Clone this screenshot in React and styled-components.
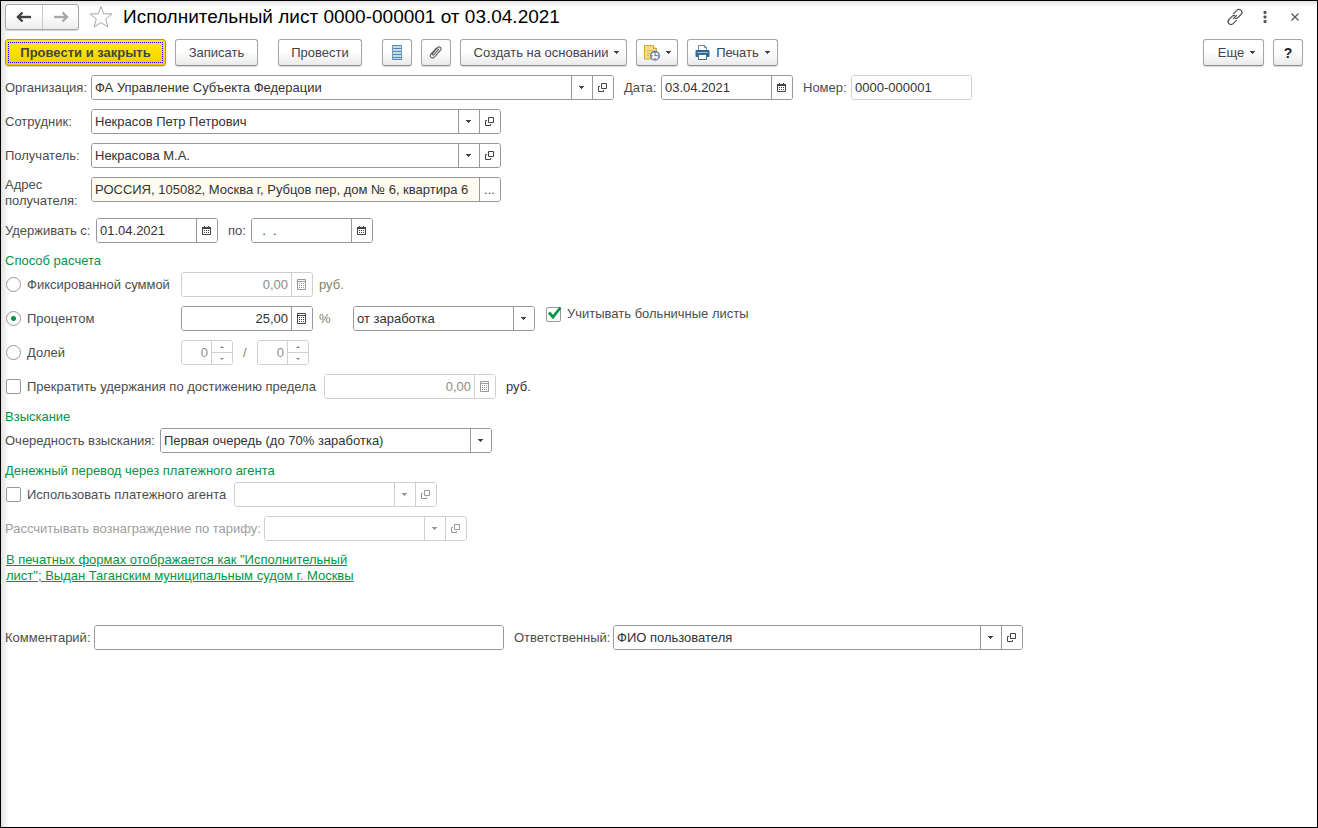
import React, { useState } from 'react';
import styled, { createGlobalStyle, css } from 'styled-components';

const GlobalStyle = createGlobalStyle`
  *, *::before, *::after {
    box-sizing: border-box;
  }

  body {
    margin: 0;
    background: #fff;
  }

  body, button, input, select {
    font-family: 'Liberation Sans', Arial, sans-serif;
    font-size: 13px;
    line-height: 16px;
    color: #4d4d4d;
  }
`;

// Window
const Window = styled.div`
  min-height: 100vh;
  padding: 3px 0 16px 4px;
  border: 1px solid #000;
  background:
    linear-gradient(to bottom, #e4e4e4, rgba(255, 255, 255, 0) 6px),
    linear-gradient(to right, #e2e2e2, #fff 8px);
`;

const TitleBar = styled.header`
  display: flex;
  align-items: center;
  height: 26px;
  padding-right: 7px;
`;

const History = styled.div`
  display: flex;
  height: 26px;
  border: 1px solid #a6a6a6;
  border-radius: 3px;
  background: linear-gradient(#fff 40%, #ececec);
  box-shadow: 0 1px 1px #d0d0d0;
`;

const HistoryButton = styled.button`
  display: flex;
  align-items: center;
  justify-content: center;
  width: 36px;
  padding: 0;
  border: 0;
  background: none;
  color: ${props => (props.disabled ? '#a8a8a8' : '#404040')};

  & + & {
    border-left: 1px solid #c8c8c8;
  }
`;

const PlainButton = styled.button`
  display: flex;
  align-items: center;
  justify-content: center;
  width: 30px;
  height: 26px;
  padding: 0;
  border: 0;
  background: none;
  color: #555;
`;

const Star = styled(PlainButton)`
  width: 24px;
  margin: 0 10px;
`;

const Title = styled.h1`
  flex: 1;
  margin: 0;
  font-size: 19px;
  line-height: 26px;
  font-weight: 400;
  color: #000;
  white-space: nowrap;
`;

// Command bar
const Toolbar = styled.div`
  display: flex;
  gap: 9px;
  margin-top: 9px;
  padding-right: 14px;
`;

const Spacer = styled.div`
  flex: 1;
`;

const Group = styled.div`
  display: flex;
  gap: 9px;
  margin-right: 11px;
`;

const Button = styled.button`
  display: flex;
  align-items: center;
  justify-content: center;
  gap: 6px;
  min-width: ${props => props.$width || 30}px;
  height: 27px;
  padding: 0 0 0 ${props => (props.$menu ? 6 : 0)}px;
  border: 1px solid #a6a6a6;
  border-bottom-color: #8f8f8f;
  border-radius: 3px;
  background: linear-gradient(#fff 45%, #eaeaea);
  box-shadow: 0 1px 1px #d4d4d4;
  color: #444;
  white-space: nowrap;

  ${props => props.$primary && css`
    border-color: #b09a1c;
    background: linear-gradient(#ffe817, #fbdc00 60%, #efcd00);
    font-weight: 700;
    outline: 1px dotted #0000ff;
    outline-offset: -4px;
  `}
`;

const Help = styled(Button)`
  font-size: 14px;
  font-weight: 700;
  color: #222;
`;

// Form
const Form = styled.form`
  display: flex;
  flex-direction: column;
  gap: 9px;
  margin-top: 9px;
  padding-right: 14px;
`;

const Row = styled.div`
  display: flex;
  align-items: center;
  min-height: 25px;
`;

const FooterRow = styled(Row)`
  margin-top: 32px;
`;

const TopRow = styled(Row)`
  align-items: flex-start;
`;

const Label = styled.label`
  flex: none;
  width: ${props => (props.$width ? `${props.$width}px` : 'auto')};
  margin-left: ${props => props.$indent || 0}px;
  color: ${props => (props.$muted ? '#a0a0a0' : '#4d4d4d')};
`;

const Unit = styled.span`
  flex: none;
  width: ${props => (props.$width ? `${props.$width}px` : 'auto')};
  margin-left: ${props => props.$indent || 6}px;
  color: ${props => (props.$strong ? '#333' : '#85826a')};
`;

const Section = styled.fieldset`
  display: flex;
  flex-direction: column;
  gap: 9px;
  min-width: 0;
  margin: 0;
  padding: 0;
  border: 0;
`;

const Legend = styled.legend`
  margin-bottom: 3px;
  padding: 1px 0 0;
  color: #009646;
`;

const Field = styled.div`
  display: flex;
  flex: 0 1 ${props => props.$width}px;
  min-width: 0;
  height: 25px;
  border: 1px solid ${props => (props.$muted ? '#cfcfcf' : '#989898')};
  border-radius: 3px;
  background: #fff;
  color: ${props => (props.$muted ? '#999' : '#444')};
  overflow: hidden;
`;

const Input = styled.input`
  flex: 1;
  min-width: 0;
  padding: 0 3px;
  border: 0;
  outline: 0;
  background: ${props => (props.$tinted ? '#fffbf0' : '#fff')};
  color: #333;
  text-align: ${props => props.$align || 'left'};

  &:disabled {
    color: #8c8c8c;
  }
`;

const SelectBox = styled.div`
  position: relative;
  display: flex;
  flex: 1;
  min-width: 0;
`;

const Select = styled.select`
  flex: 1;
  min-width: 0;
  padding: 0 24px 0 3px;
  border: 0;
  outline: 0;
  appearance: none;
  background: #fff;
  color: #333;
`;

const SelectArrow = styled.span`
  position: absolute;
  top: 0;
  right: 0;
  bottom: 0;
  display: flex;
  align-items: center;
  justify-content: center;
  width: 21px;
  padding-right: 1px;
  border-left: 1px solid ${props => (props.$muted ? '#cfcfcf' : '#989898')};
  pointer-events: none;
`;

const FieldButton = styled.button`
  display: flex;
  flex: none;
  align-items: center;
  justify-content: center;
  width: 21px;
  padding: 0 1px 0 0;
  border: 0;
  border-left: 1px solid ${props => (props.disabled ? '#cfcfcf' : '#989898')};
  background: #fff;
  color: ${props => (props.disabled ? '#999' : '#444')};
`;

const Steps = styled.div`
  display: flex;
  flex: none;
  flex-direction: column;
  width: 21px;
  border-left: 1px solid #cfcfcf;
`;

const StepButton = styled.button`
  display: flex;
  flex: 1;
  align-items: center;
  justify-content: center;
  padding: 0;
  border: 0;
  background: #fff;
  color: #888;

  & + & {
    border-top: 1px solid #cfcfcf;
  }
`;

const Choice = styled.label`
  display: flex;
  flex: none;
  align-items: center;
  gap: 6px;
  width: ${props => (props.$width ? `${props.$width}px` : 'auto')};
  padding-left: 1px;
  white-space: nowrap;
`;

const TopChoice = styled(Choice)`
  align-self: flex-start;
  margin-left: 10px;
`;

const Radio = styled.input`
  width: 15px;
  height: 15px;
  margin: 0;
  border: 1px solid #989898;
  border-radius: 50%;
  appearance: none;
  background: #fff;

  &:checked {
    background: radial-gradient(circle, #009646 2px, #fff 3px);
  }
`;

const CheckFrame = styled.span`
  position: relative;
  display: flex;

  svg {
    position: absolute;
    right: -1px;
    bottom: 2px;
    pointer-events: none;
  }
`;

const Check = styled.input`
  width: 15px;
  height: 15px;
  margin: 0;
  border: 1px solid #989898;
  border-radius: 2px;
  appearance: none;
  background: #fff;
`;

const PrintLink = styled.a`
  display: block;
  max-width: 360px;
  margin: 2px 0 0 1px;
  color: #009646;
  text-decoration: underline;
`;

// Icons
const ArrowIcon = ({ flip }) => (
  <svg width="16" height="12" viewBox="0 0 16 12" fill="none" stroke="currentColor">
    <g transform={flip ? 'matrix(-1 0 0 1 16 0)' : undefined}>
      <path d="M2 6h13" strokeWidth="2.4" />
      <path d="M6.5 1.5L2 6l4.5 4.5" strokeWidth="2.4" />
    </g>
  </svg>
);

const StarIcon = () => (
  <svg width="24" height="24" viewBox="0 0 24 24" fill="#fff" stroke="#a3a9ad">
    <path d="M12 1.5l2.8 7.3 8.2.2-6.3 5 2.2 8L12 17.5 5.1 22l2.2-8L1 9l8.2-.2z" />
  </svg>
);

const LinkIcon = () => (
  <svg width="18" height="18" viewBox="0 0 18 18" fill="none" stroke="currentColor" strokeWidth="1.2" strokeLinecap="round">
    <path d="M7.6 5.6l3.2-3.3a2.9 2.9 0 0 1 4.3 0 3 3 0 0 1 0 4.2l-3.2 3.2a2.9 2.9 0 0 1-2.6.8" />
    <path d="M10.4 12.4l-3.2 3.3a2.9 2.9 0 0 1-4.3 0 3 3 0 0 1 0-4.2l3.200-3.200a2.900 2.900 0 0 1 2.600-.8" />
    <path d="M7.500 10.500l3-3" />
  </svg>
);

const DotsIcon = () => (
  <svg width="4" height="12" viewBox="0 0 4 12" fill="currentColor">
    <rect x=".5" y="0" width="3" height="3" rx="1" />
    <rect x=".5" y="4.5" width="3" height="3" rx="1" />
    <rect x=".5" y="9" width="3" height="3" rx="1" />
  </svg>
);

const CloseIcon = () => (
  <svg width="8" height="8" viewBox="0 0 8 8" stroke="currentColor" strokeWidth="1.2">
    <path d="M.5.5l7 7M7.5.5l-7 7" />
  </svg>
);

const ListIcon = () => (
  <svg width="10" height="15" viewBox="0 0 10 15">
    <path d="M0 0h10v15H0z" fill="#c3dcea" />
    <path d="M0 .5h10M0 3.5h10M0 6.5h10M0 9.5h10M0 12.5h10M0 14.5h10" stroke="#5588ab" />
    <path d="M.5 0v15M9.500 0v15" stroke="#6e9dbc" />
  </svg>
);

const ClipIcon = () => (
  <svg width="14" height="15" viewBox="0 0 14 15" fill="none" stroke="#5c5c5c" strokeWidth="1.1" strokeLinecap="round">
    <path d="M9.800 4.200L5 9.600c-.9 1-2.200-.1-1.400-1.200l5-5.700c1.800-1.900 4.500.4 2.900 2.500l-6 6.900c-2.200 2.300-5.500-.4-3.600-3L7.400 3" />
  </svg>
);

const ReportIcon = () => (
  <svg width="16" height="17" viewBox="0 0 16 17">
    <path d="M.5 1.500h9l3 3v10.500H.5z" fill="#f7dc86" stroke="#d2a63c" />
    <path d="M9.500 1.500v3h3" fill="#fff3c4" stroke="#d2a63c" />
    <path d="M3 6.500h6M3 9h3M3 11.500h2" stroke="#dfb754" />
    <circle cx="11" cy="11.800" r="4.300" fill="#fff" stroke="#3f7fb5" strokeWidth="1.300" />
    <path d="M11 12V9.500M11 12l2-1" stroke="#3f6d9b" />
    <path d="M11 8v1.500M11 14v1.500M7.300 11.800h1.500M13.200 11.800h1.500" stroke="#e23c2d" strokeWidth="1.300" />
  </svg>
);

const PrinterIcon = () => (
  <svg width="15" height="15" viewBox="0 0 15 15">
    <path d="M3.500 6V.5h6l2 2V6" fill="#fff" stroke="#6b8ca5" />
    <path d="M9.500.5v2h2" fill="none" stroke="#6b8ca5" />
    <rect x=".5" y="5" width="14" height="7" rx="1" fill="#2f668f" />
    <path d="M2 7.500h11" stroke="#9cc2da" />
    <rect x="3.500" y="9.500" width="8" height="5" fill="#fff" stroke="#41718f" />
  </svg>
);

const Caret = () => (
  <svg width="5" height="3" viewBox="0 0 5 3" fill="currentColor">
    <path d="M0 0h5v1H4v1H3v1H2V2H1V1H0z" />
  </svg>
);

const StepIcon = ({ up }) => (
  <svg width="4" height="2" viewBox="0 0 4 2" fill="currentColor">
    <path d={up ? 'M0 2h4L2 0z' : 'M0 0h4L2 2z'} />
  </svg>
);

const OpenIcon = () => (
  <svg width="9" height="9" viewBox="0 0 9 9" fill="none" stroke="currentColor">
    <path d="M3.5.5h5v5h-5z" />
    <path d="M2 3.5H.5v5h5V7" />
  </svg>
);

const CalendarIcon = () => (
  <svg width="9" height="11" viewBox="0 0 9 11" fill="none" stroke="currentColor">
    <path d="M.5 2.5h8v7h-8z" />
    <path d="M0 2.500h9M0 3.500h9" />
    <path d="M2.500 1v2M6.500 1v2" />
    <path d="M2 5.500h5M2 7.500h5" strokeDasharray="1 1" />
  </svg>
);

const CalculatorIcon = () => (
  <svg width="9" height="11" viewBox="0 0 9 11" fill="none" stroke="currentColor">
    <path d="M.5.5h8v10h-8zM0 2.5h9" />
    <path d="M2 4.5h5M2 6.5h5M2 8.5h5" strokeDasharray="1 1" />
  </svg>
);

const TickIcon = () => (
  <svg width="15" height="14" viewBox="0 0 15 14" fill="none" stroke="#009646" strokeWidth="2.8">
    <path d="M2 6.5l4 4.5L13.5 1.5" />
  </svg>
);

// Composite fields
const PickField = ({ id, width, value, open, disabled }) => (
  <Field $width={width} $muted={disabled}>
    <SelectBox>
      <Select id={id} disabled={disabled} defaultValue={value}>
        <option>{value}</option>
      </Select>
      <SelectArrow $muted={disabled}><Caret /></SelectArrow>
    </SelectBox>
    {open && (
      <FieldButton type="button" disabled={disabled} aria-label="Открыть"><OpenIcon /></FieldButton>
    )}
  </Field>
);

const DateField = ({ id, width, value }) => (
  <Field $width={width}>
    <Input id={id} defaultValue={value} />
    <FieldButton type="button" aria-label="Выбрать дату"><CalendarIcon /></FieldButton>
  </Field>
);

const AmountField = ({ label, width, value, disabled }) => (
  <Field $width={width} $muted={disabled}>
    <Input aria-label={label} $align="right" defaultValue={value} disabled={disabled} />
    <FieldButton type="button" disabled={disabled} aria-label="Калькулятор"><CalculatorIcon /></FieldButton>
  </Field>
);

const SpinField = ({ label }) => (
  <Field $width={52} $muted>
    <Input aria-label={label} $align="right" defaultValue="0" disabled />
    <Steps>
      <StepButton type="button" disabled aria-label="Больше"><StepIcon up /></StepButton>
      <StepButton type="button" disabled aria-label="Меньше"><StepIcon /></StepButton>
    </Steps>
  </Field>
);

const CheckBox = ({ checked: initial = false }) => {
  const [checked, setChecked] = useState(initial);

  return (
    <CheckFrame>
      <Check type="checkbox" checked={checked} onChange={e => setChecked(e.target.checked)} />
      {checked && <TickIcon />}
    </CheckFrame>
  );
};

const App = () => (
  <Window>
    <GlobalStyle />
    <TitleBar>
      <History>
        <HistoryButton aria-label="Назад"><ArrowIcon /></HistoryButton>
        <HistoryButton disabled aria-label="Вперед"><ArrowIcon flip /></HistoryButton>
      </History>
      <Star aria-label="В избранное"><StarIcon /></Star>
      <Title>Исполнительный лист 0000-000001 от 03.04.2021</Title>
      <PlainButton aria-label="Получить ссылку"><LinkIcon /></PlainButton>
      <PlainButton aria-label="Меню"><DotsIcon /></PlainButton>
      <PlainButton aria-label="Закрыть"><CloseIcon /></PlainButton>
    </TitleBar>

    <Toolbar>
      <Group>
        <Button $primary $width={161}>Провести и закрыть</Button>
        <Button $width={83}>Записать</Button>
      </Group>
      <Group>
        <Button $width={84}>Провести</Button>
      </Group>
      <Button aria-label="Движения документа"><ListIcon /></Button>
      <Button aria-label="Присоединенные файлы"><ClipIcon /></Button>
      <Button $menu $width={167}>Создать на основании <Caret /></Button>
      <Button $width={42} aria-label="Отчеты"><ReportIcon /><Caret /></Button>
      <Button $width={91}><PrinterIcon /> Печать <Caret /></Button>
      <Spacer />
      <Button $menu $width={61}>Еще <Caret /></Button>
      <Help>?</Help>
    </Toolbar>

    <Form onSubmit={e => e.preventDefault()}>
      <Row>
        <Label htmlFor="organization" $width={86}>Организация:</Label>
        <PickField id="organization" width={523} value="ФА Управление Субъекта Федерации" open />
        <Label htmlFor="date" $width={37} $indent={10}>Дата:</Label>
        <DateField id="date" width={132} value="03.04.2021" />
        <Label htmlFor="number" $width={48} $indent={10}>Номер:</Label>
        <Field $width={121} $muted>
          <Input id="number" readOnly value="0000-000001" />
        </Field>
      </Row>
      <Row>
        <Label htmlFor="employee" $width={86}>Сотрудник:</Label>
        <PickField id="employee" width={410} value="Некрасов Петр Петрович" open />
      </Row>
      <Row>
        <Label htmlFor="recipient" $width={86}>Получатель:</Label>
        <PickField id="recipient" width={410} value="Некрасова М.А." open />
      </Row>
      <TopRow>
        <Label htmlFor="address" $width={86}>Адрес получателя:</Label>
        <Field $width={410}>
          <Input id="address" $tinted defaultValue="РОССИЯ, 105082, Москва г, Рубцов пер, дом № 6, квартира 6" />
          <FieldButton type="button" aria-label="Изменить адрес">...</FieldButton>
        </Field>
      </TopRow>
      <Row>
        <Label htmlFor="from" $width={91}>Удерживать с:</Label>
        <DateField id="from" width={122} value="01.04.2021" />
        <Label htmlFor="to" $width={23} $indent={10}>по:</Label>
        <DateField id="to" width={122} value="  .  ." />
      </Row>

      <Section>
        <Legend>Способ расчета</Legend>
        <Row>
          <Choice $width={176}><Radio type="radio" name="method" />Фиксированной суммой</Choice>
          <AmountField label="Сумма" width={132} value="0,00" disabled />
          <Unit>руб.</Unit>
        </Row>
        <Row>
          <Choice $width={176}><Radio type="radio" name="method" defaultChecked />Процентом</Choice>
          <AmountField label="Процент" width={132} value="25,00" />
          <Unit as="label" htmlFor="base" $width={34}>%</Unit>
          <PickField id="base" width={182} value="от заработка" />
          <TopChoice><CheckBox checked />Учитывать больничные листы</TopChoice>
        </Row>
        <Row>
          <Choice $width={176}><Radio type="radio" name="method" />Долей</Choice>
          <SpinField label="Числитель" />
          <Unit $indent={10} $width={14}>/</Unit>
          <SpinField label="Знаменатель" />
        </Row>
        <Row>
          <Choice $width={319}><CheckBox />Прекратить удержания по достижению предела</Choice>
          <AmountField label="Предел" width={172} value="0,00" disabled />
          <Unit $strong $indent={10}>руб.</Unit>
        </Row>
      </Section>

      <Section>
        <Legend>Взыскание</Legend>
        <Row>
          <Label htmlFor="priority" $width={155}>Очередность взыскания:</Label>
          <PickField id="priority" width={332} value="Первая очередь (до 70% заработка)" />
        </Row>
      </Section>

      <Section>
        <Legend id="agent-legend">Денежный перевод через платежного агента</Legend>
        <Row>
          <Choice $width={229}><CheckBox />Использовать платежного агента</Choice>
          <PickField id="agent" width={203} value="" open disabled />
        </Row>
        <Row>
          <Label htmlFor="tariff" $width={259} $muted>Рассчитывать вознаграждение по тарифу:</Label>
          <PickField id="tariff" width={203} value="" open disabled />
        </Row>
      </Section>

      <PrintLink href="#print">
        В печатных формах отображается как "Исполнительный лист"; Выдан Таганским муниципальным судом г. Москвы
      </PrintLink>

      <FooterRow>
        <Label htmlFor="comment" $width={89}>Комментарий:</Label>
        <Field $width={410}>
          <Input id="comment" />
        </Field>
        <Label htmlFor="responsible" $width={99} $indent={10}>Ответственный:</Label>
        <PickField id="responsible" width={410} value="ФИО пользователя" open />
      </FooterRow>
    </Form>
  </Window>
);

export default App;
